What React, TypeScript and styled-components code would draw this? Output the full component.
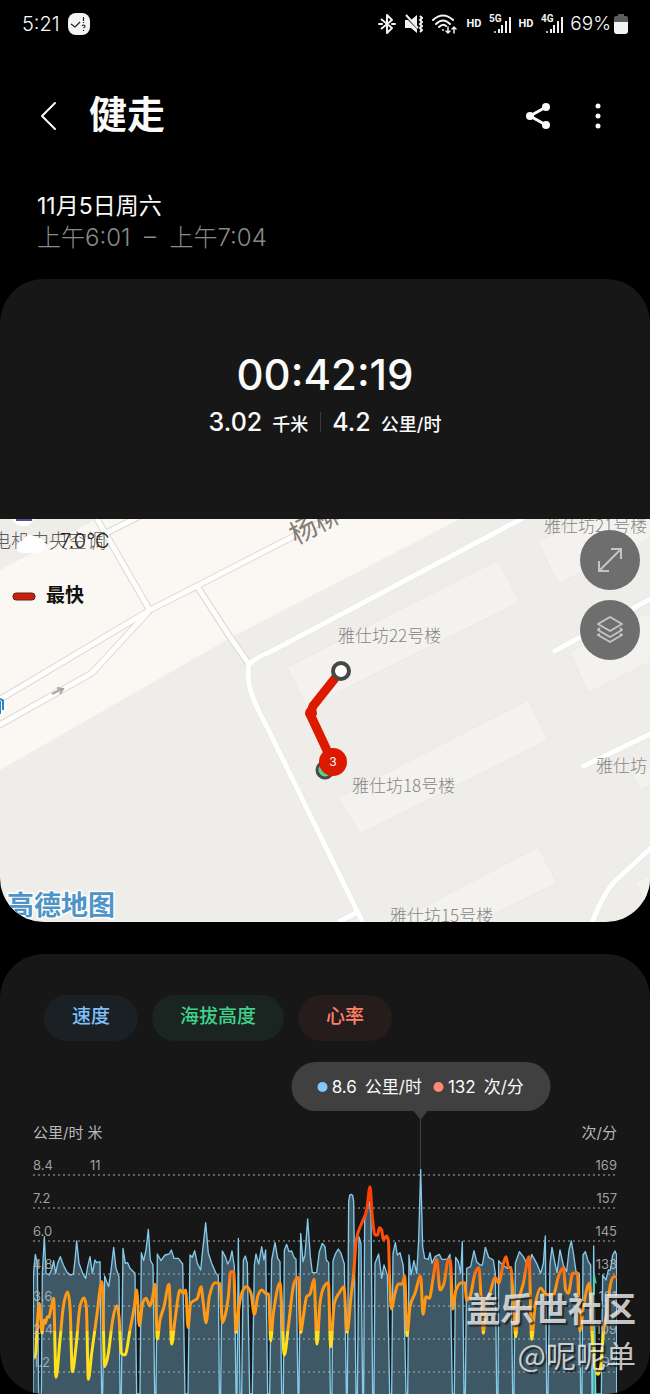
import React from "react";
import styled, { createGlobalStyle } from "styled-components";

const GlobalStyle = createGlobalStyle`
  * { box-sizing: border-box; }
  body {
    margin: 0;
    background: #000;
    color: #fafafa;
    font-family: Inter, "Noto Sans CJK SC", sans-serif;
  }
  button { font: inherit; color: inherit; border: 0; padding: 0; background: none; cursor: pointer; }
  svg { display: block; }
`;

const Page = styled.main`
  width: 100%;
  overflow: hidden;
`;

/* ---------- status bar ---------- */

const StatusBar = styled.div`
  display: flex;
  align-items: center;
  justify-content: space-between;
  height: 48px;
  padding: 0 22px;
`;

const StatusGroup = styled.div<{ $gap: number }>`
  display: flex;
  align-items: center;
  gap: ${(p) => p.$gap}px;
`;

const StatusText = styled.span<{ $large?: boolean }>`
  font-size: ${(p) => (p.$large ? 20 : 19)}px;
  line-height: 24px;
  font-weight: 300;
`;

const HdMark = styled.span`
  font-family: Roboto, sans-serif;
  font-size: 11px;
  line-height: 16px;
  font-weight: 700;
`;

const NetworkText = styled.text`
  font-family: Roboto, sans-serif;
  font-size: 10px;
  font-weight: 700;
`;

/* ---------- header ---------- */

const Header = styled.header`
  display: flex;
  align-items: center;
  height: 136px;
  padding: 0 40px 0 37px;
`;

const IconButton = styled.button`
  display: flex;
  align-items: center;
  justify-content: center;
  width: 24px;
  height: 40px;
`;

const Title = styled.h1`
  flex: 1;
  margin: 0 0 4px 28px;
  font-size: 38px;
  line-height: 48px;
  font-weight: 600;
`;

const Actions = styled.div`
  display: flex;
  gap: 36px;
`;

const DateBlock = styled.section`
  height: 95px;
  padding: 6px 37px 0;
`;

const DateLine = styled.p<{ $muted?: boolean }>`
  margin: 0;
  font-size: ${(p) => (p.$muted ? 24 : 23)}px;
  line-height: 32px;
  font-weight: ${(p) => (p.$muted ? 300 : 400)};
  color: ${(p) => (p.$muted ? "#8a8a8a" : "#fafafa")};
  white-space: pre;
`;

/* ---------- cards ---------- */

const Card = styled.section`
  background: #171717;
  border-radius: 44px;
  overflow: hidden;
  margin-bottom: 32px;

  &:last-of-type { margin-bottom: 0; }
`;

const Summary = styled.div`
  display: flex;
  flex-direction: column;
  align-items: center;
  height: 240px;
  padding-top: 70px;
`;

const Timer = styled.div`
  font-size: 42px;
  line-height: 52px;
  font-weight: 500;
`;

const Stats = styled.div`
  display: flex;
  align-items: center;
  margin-top: 6px;
`;

const Stat = styled.div`
  display: flex;
  align-items: baseline;
  gap: 10px;
  line-height: 30px;

  & + & {
    margin-left: 12px;
    padding-left: 12px;
    position: relative;
  }
  & + &::before {
    content: "";
    position: absolute;
    left: 0;
    top: 5px;
    width: 1px;
    height: 20px;
    background: #3a3a3a;
  }
`;

const StatValue = styled.span`
  font-size: 25px;
  font-weight: 500;
`;

const StatUnit = styled.span`
  font-size: 18px;
  font-weight: 500;
`;

/* ---------- map ---------- */

const MapFrame = styled.div`
  position: relative;
  height: 403px;
`;

const MapCanvas = styled.svg`
  width: 100%;
  height: 100%;
`;

const PlaceName = styled.text`
  font-family: "Noto Sans CJK SC", sans-serif;
  font-size: 17px;
  font-weight: 300;
  fill: #858585;
`;

const MapControls = styled.div`
  position: absolute;
  top: 11px;
  right: 10px;
  display: flex;
  flex-direction: column;
  gap: 10px;
`;

const RoundButton = styled.button`
  display: flex;
  align-items: center;
  justify-content: center;
  width: 60px;
  height: 60px;
  border-radius: 50%;
  background: #6e6e6e;
`;

/* ---------- chart ---------- */

const ChartCard = styled(Card)`
  position: relative;
  padding: 41px 33px 0;
`;

const Tabs = styled.div`
  display: flex;
  gap: 14px;
  padding-left: 11px;
`;

const Tab = styled.button<{ $ink: string; $fill: string }>`
  height: 46px;
  padding: 0 28px 2px;
  border-radius: 23px;
  font-size: 19px;
  line-height: 24px;
  font-weight: 500;
  color: ${(p) => p.$ink};
  background: ${(p) => p.$fill};
`;

const Plot = styled.div`
  position: relative;
  margin-top: 21px;
  padding-top: 62px;
`;

const AxisTitles = styled.div`
  display: flex;
  justify-content: space-between;
  font-size: 15px;
  line-height: 18px;
  margin-bottom: 8px;
  color: #b8b8b8;
  white-space: pre;
`;

const ChartCanvas = styled.svg`
  width: 100%;
  height: auto;
`;

const Tooltip = styled.div`
  position: absolute;
  top: 0;
  left: 66.4%;
  transform: translateX(-50%);
  display: flex;
  align-items: center;
  justify-content: center;
  gap: 12px;
  width: 259px;
  height: 49px;
  border-radius: 25px;
  background: #404040;
  font-size: 17px;
  line-height: 24px;
  white-space: nowrap;
`;

const TooltipPointer = styled.svg`
  position: absolute;
  top: 49px;
  left: 50%;
  width: 16px;
  height: 58px;
  transform: translateX(-50%);
`;

const Reading = styled.span<{ $dot: string }>`
  display: flex;
  align-items: center;
  gap: 8px;

  &::before {
    content: "";
    width: 10px;
    height: 10px;
    margin-right: -4px;
    border-radius: 50%;
    background: ${(p) => p.$dot};
  }
`;

const Signature = styled.div`
  position: absolute;
  right: 14px;
  bottom: 18px;
  display: flex;
  flex-direction: column;
  align-items: flex-end;
  color: rgba(235, 235, 235, 0.82);
  text-shadow: 2px 2px 1px rgba(20, 20, 20, 0.7);
`;

const Community = styled.span`
  font-size: 34px;
  line-height: 44px;
  font-weight: 700;
`;

const Author = styled.span`
  font-family: "Noto Sans CJK SC", sans-serif;
  font-size: 30px;
  line-height: 44px;
`;

/* ---------- chart data: [x, y] in thirds of a pixel ---------- */

type Pt = [number, number];

const pairs = (s: string, dx: number): Pt[] =>
  s
    .trim()
    .split(/\s+/)
    .map((p) => {
      const [x, y] = p.split(",").map(Number);
      return [x + dx, y] as Pt;
    });

const speed: Pt[] = [
  ...pairs(
    `99,762 100,405 106,343 112,370 116,762 124,762 127,400 133,290 138,400 148,405 156,385 161,362 167,400 173,370 181,350 190,375 200,395 210,405 220,402 225,360 230,303 237,370 248,400 257,415 263,380 270,350 277,400 285,360 290,368 300,365 305,762 308,762 314,408 320,425 326,440 332,400 341,322 348,385 357,410 360,762 364,762 369,325 376,370 383,368 390,385 405,400 410,762 420,762 424,338 431,362 438,330 445,268 451,360 459,375 464,762 468,762 472,342 483,362 495,345 508,342 514,330 522,355 535,355 548,372 555,762 564,762 570,345 577,352 584,332 592,370 602,390 608,330 617,248 625,340 635,370 648,400 655,408 658,762`,
    -99
  ),
  ...pairs(
    `17,762 22,333 32,352 38,372 45,360 51,333 58,380 63,762 66,762 70,295 75,762 80,762 85,360 91,348 97,370 104,762 112,762 118,375 123,342 131,372 140,320 147,360 152,330 158,762 164,762 170,360 180,308 188,355 195,365 200,762 205,762 208,330 215,313 222,335 230,333 237,352 243,358 249,762 252,762 257,280 264,365 270,345 278,237 286,350 292,398 305,398 313,335 322,310 330,320 334,360 341,368 346,762 351,762 354,362 362,340 370,327 378,340 388,372 394,762 397,762 401,185 404,166 408,163 413,166 416,185 419,420 423,762 427,762 432,290 438,310 443,762 446,762 449,240 456,210 463,185 468,230 473,762 477,762 480,370 491,342 500,415 507,375 517,405 524,762 530,762 534,340 541,308 547,345 555,338 565,378 573,762 578,762 582,345 588,405 597,362 605,400 611,300 617,88 623,320 629,355 640,358`,
    546
  ),
  ...pairs(
    `0,338 6,370 15,350 28,343 35,358 52,358 60,343 67,762 73,762 77,352 85,365 92,400 97,305 102,762 106,762 110,385 122,380 132,332 140,365 150,375 157,375 166,322 176,352 190,360 196,400 200,762 204,762 206,362 218,375 232,385 243,380 248,762 252,762 256,370 268,335 280,350 290,370 297,385 305,343 320,370 332,400 340,370 346,288 350,762 354,762 360,370 366,322 375,370 381,398 390,330 400,375 410,395 417,330 424,303 431,345 438,395 448,400 452,762 456,762 459,345 466,335 475,365 482,375 486,762 488,762 491,318 497,762 514,762 518,405 528,420 535,390 541,390 548,345 555,333 560,345 560,762`,
    1191
  ),
];

const heart: Pt[] = [
  ...pairs(
    `106,650 112,550 118,490 126,580 132,540 136,550 142,530 147,532 152,510 161,475 168,712 180,600 190,500 203,456 210,500 217,695 228,620 240,500 252,474 259,500 265,718 275,640 290,530 306,425 314,680 325,640 338,540 350,497 357,530 364,640 375,645 390,570 403,500 410,450 418,557 428,490 438,475 450,498 458,470 465,433 472,597 480,540 492,500 507,433 515,612 525,540 540,450 550,460 557,450 564,563 572,490 582,482 592,475 603,440 610,490 618,548 628,470 645,428`,
    -99
  ),
  ...pairs(
    `15,430 22,548 32,520 40,470 47,395 56,395 63,577 72,500 82,455 95,440 108,460 118,523 128,470 140,450 152,460 161,462 167,603 175,520 195,428 208,645 220,560 237,430 250,412 257,577 265,530 275,470 285,462 297,418 306,612 315,490 327,440 340,428 347,620 358,490 375,455 387,440 396,577 408,470 416,400 424,300 440,250 455,210 465,140 472,230 480,285 488,285 493,263 500,270 505,300 514,288 520,300 524,420 529,507 540,460 550,432 562,432 569,408 576,587 585,500 600,460 617,408 624,523 633,470 643,475`,
    546
  ),
  ...pairs(
    `10,410 20,357 30,450 42,430 55,360 62,362 68,507 78,450 95,428 104,428 110,480 120,470 135,400 147,383 153,470 160,580 168,490 180,460 195,412 207,430 218,380 228,350 235,380 243,385 250,480 257,590 265,490 280,430 297,350 305,598 315,500 332,445 345,460 358,465 370,465 385,410 400,383 407,450 415,460 428,400 442,400 450,572 460,500 478,430 485,560 495,680 504,703 512,680 520,580 530,520 542,430 551,410 560,410`,
    1191
  ),
];

/* Cubic curve through every point; peaks and troughs get flat tangents. */
const curve = (pts: Pt[]) => {
  const slope = (i: number) => {
    const a = pts[i - 1];
    const b = pts[i];
    const c = pts[i + 1];
    if (!a || !c || c[0] === a[0]) return 0;
    if ((b[1] - a[1]) * (c[1] - b[1]) <= 0) return 0;
    const s = (c[1] - a[1]) / (c[0] - a[0]);
    const left = (b[1] - a[1]) / (b[0] - a[0] || 1);
    const right = (c[1] - b[1]) / (c[0] - b[0] || 1);
    const cap = 2 * Math.min(Math.abs(left), Math.abs(right));
    return Math.sign(s) * Math.min(Math.abs(s), cap);
  };
  let d = `M${pts[0][0]} ${pts[0][1]}`;
  for (let i = 1; i < pts.length; i++) {
    const [x0, y0] = pts[i - 1];
    const [x1, y1] = pts[i];
    const h = (x1 - x0) / 3;
    d += `C${x0 + h} ${y0 + slope(i - 1) * h} ${x1 - h} ${y1 - slope(i) * h} ${x1} ${y1}`;
  }
  return d;
};

const line = (pts: Pt[]) => "M" + pts.map((p) => p.join(" ")).join("L");

const gridRows = [
  { y: 25, left: "8.4", right: "169" },
  { y: 58, left: "7.2", right: "157" },
  { y: 91, left: "6.0", right: "145" },
  { y: 124, left: "4.8", right: "133" },
  { y: 156, left: "3.6", right: "121" },
  { y: 189, left: "2.4", right: "109" },
  { y: 222, left: "1.2", right: "97" },
];

function Chart() {
  return (
    <ChartCanvas viewBox="0 0 584 244" role="img" aria-label="速度与心率曲线">
      <defs>
        <linearGradient id="hr" gradientUnits="userSpaceOnUse" x1="0" y1="140" x2="0" y2="762">
          <stop offset="0" stopColor="#ff3a06" />
          <stop offset="0.22" stopColor="#ff4a08" />
          <stop offset="0.4" stopColor="#ff6a0c" />
          <stop offset="0.48" stopColor="#ff9410" />
          <stop offset="0.695" stopColor="#ffa01c" />
          <stop offset="0.696" stopColor="#ffe01a" />
          <stop offset="1" stopColor="#ffe01a" />
        </linearGradient>
      </defs>
      <svg x="0" y="-10" width="584" height="254" viewBox="0 0 1752 762">
        <path d={line(speed) + "Z"} fill="#3e5965" />
        <path d={line(speed)} fill="none" stroke="#84caea" strokeWidth="4" strokeLinejoin="round" />
        <path d="M1683 762V400L1686 415L1689 430" fill="none" stroke="#3ed3a6" strokeWidth="4" />
      </svg>
      {gridRows.map((r) => (
        <line key={r.y} x1="0" x2="584" y1={r.y} y2={r.y} stroke="#a9b0b3" strokeWidth="1" strokeDasharray="2 3" />
      ))}
      <svg x="0" y="-10" width="584" height="254" viewBox="0 0 1752 762">
        <path d={curve(heart)} fill="none" stroke="url(#hr)" strokeWidth="9" strokeLinejoin="round" strokeLinecap="round" />
      </svg>
      <g fontSize="13" fill="#b9bdbf" fillOpacity="0.85">
        {gridRows.map((r) => (
          <React.Fragment key={r.left}>
            <text x="0" y={r.y - 5}>{r.left}</text>
            <text x="584" y={r.y - 5} textAnchor="end">{r.right}</text>
          </React.Fragment>
        ))}
        <text x="57" y="20">11</text>
      </g>
    </ChartCanvas>
  );
}

const roads = [
  "M-6 184L150 91L197 67L335 -4",
  "M96 -2L149 90",
  "M149 92L92 154L-6 209",
  "M197 67L230 118L249 145",
  "M106 14L140 -3",
];

const footpaths = [
  "M250 145C256 138 264 136 272 132L525 -2",
  "M249 144C246 162 250 176 265 204L363 404",
  "M553 133L652 79",
  "M582 248L652 214",
  "M592 404C598 388 604 374 614 363L652 328",
  "M338 403L358 393",
];

const buildings = [
  "M287 148L498 41L520 83L307 189Z",
  "M538 23L630 -24H650V20L558 65Z",
  "M570 133L650 93V143L588 174Z",
  "M338 279L528 181L548 221L360 315Z",
  "M395 403L538 328L557 364L478 403Z",
  "M633 256L650 247V266L640 271Z",
  "M635 364L650 356V390Z",
];

const placeNames = [
  { x: 338, y: 123, t: "雅仕坊22号楼" },
  { x: 352, y: 273, t: "雅仕坊18号楼" },
  { x: 390, y: 403, t: "雅仕坊15号楼" },
  { x: 544, y: 13, t: "雅仕坊21号楼" },
  { x: 596, y: 253, t: "雅仕坊" },
];

function RouteMap() {
  return (
    <MapFrame>
      <MapCanvas viewBox="0 0 650 403" preserveAspectRatio="xMidYMid slice" role="img" aria-label="路线地图">
        <rect width="650" height="403" fill="#efede9" />
        <path d="M0 51L97 0H460L230 119L0 251Z" fill="#fbf8f3" />
        {buildings.map((d) => (
          <path key={d} d={d} fill="#f4f2ee" stroke="#ebe9e4" strokeWidth="1" />
        ))}
        {roads.map((d) => (
          <path key={d} d={d} fill="none" stroke="#dcd8d4" strokeWidth="7" strokeLinejoin="round" />
        ))}
        {footpaths.map((d) => (
          <path key={d} d={d} fill="none" stroke="#e4e3e0" strokeWidth="6" />
        ))}
        {roads.map((d) => (
          <path key={d} d={d} fill="none" stroke="#fefefd" strokeWidth="5" strokeLinejoin="round" />
        ))}
        {footpaths.map((d) => (
          <path key={d} d={d} fill="none" stroke="#fff" strokeWidth="5" />
        ))}
        <path d="M52 175L62 170M57 169L63 170L60 175" fill="none" stroke="#aaa6a2" strokeWidth="2" />
        <circle cx="23" cy="-5" r="12" fill="#fff" />
        <rect x="16" y="-2" width="16" height="4" fill="#5b4a9b" />
        <circle cx="-4" cy="187" r="11" fill="#fff" />
        <path d="M0 180L4 182M0 182V195M3 182V191" stroke="#2b86c8" strokeWidth="2" />

        {placeNames.map((p) => (
          <PlaceName key={p.t} x={p.x} y={p.y}>{p.t}</PlaceName>
        ))}
        <text x="296" y="26" fontSize="27" fill="#837c74" transform="rotate(-28 296 26)">杨柳</text>
        <text x="-8" y="29" fontSize="19" fill="#5d5d5d" fontWeight="300">电机中央空调</text>
        <path d="M22 34a6 6 0 0 1 1-12a8 8 0 0 1 14-3a7 7 0 0 1 6 12q-2 3-5 3Z" fill="#fff" />
        <text x="60" y="29" fontSize="20" fontWeight="300" fill="#222">7.0°C</text>

        <rect x="13" y="74" width="22" height="7" rx="3" fill="#c9200c" stroke="#5e231c" />
        <text x="46" y="83" fontSize="19" fontWeight="600" fill="#111">最快</text>

        <circle cx="325" cy="251" r="8" fill="#5bd38a" stroke="#4a4a4a" strokeWidth="3" />
        <path d="M340 153L313 187L310 195L331 240" fill="none" stroke="#db1a00" strokeWidth="9" strokeLinejoin="round" />
        <circle cx="311" cy="194" r="6" fill="#db1a00" />
        <circle cx="341" cy="152" r="8" fill="#fff" stroke="#474747" strokeWidth="4" />
        <circle cx="333" cy="243" r="14" fill="#db1a00" />
        <text x="333" y="247" fontSize="12" fill="#fff" textAnchor="middle">3</text>

        <text
          x="7" y="396" fontSize="27" fontWeight="700" fill="#4f94c6"
          stroke="#fff" strokeWidth="3" paintOrder="stroke"
        >
          高德地图
        </text>
      </MapCanvas>
      <MapControls>
        <RoundButton aria-label="展开地图">
          <svg width="26" height="26" viewBox="0 0 26 26" fill="none" stroke="#c4c4c4" strokeWidth="2">
            <path d="M2 24L24 2M14 2H24V12M2 14V24H12" />
          </svg>
        </RoundButton>
        <RoundButton aria-label="地图图层">
          <svg width="28" height="28" viewBox="0 0 28 28" fill="none" stroke="#c4c4c4" strokeWidth="2" strokeLinejoin="round">
            <path d="M14 1L26 8L14 15L2 8Z" />
            <path d="M4 12L2 14L14 21L26 14L24 12" />
            <path d="M4 18L2 19L14 26L26 19L24 18" />
          </svg>
        </RoundButton>
      </MapControls>
    </MapFrame>
  );
}

function SignalIcon({ label }: { label: string }) {
  return (
    <svg width="22" height="22" viewBox="0 0 22 22" fill="#f2f2f2">
      <NetworkText x="0" y="9">{label}</NetworkText>
      <circle cx="6" cy="19" r="1" />
      <path d="M9 16h2v4H9zM12 12h2v8h-2zM16 8h2v12h-2zM20 4h2v16h-2z" />
    </svg>
  );
}

export default function App() {
  return (
    <Page>
      <GlobalStyle />
      <StatusBar>
        <StatusGroup $gap={8}>
          <StatusText $large>5:21</StatusText>
          <svg width="22" height="22" viewBox="0 0 22 22">
            <rect width="22" height="22" rx="8" fill="#f4f4f4" />
            <path d="M3 11L7 14L12 9" fill="none" stroke="#222" strokeWidth="1.2" />
            <path d="M15.500 4V8M15.500 9V10M14 13q1.500-2 3 0q0 1-1.500 2M15.500 17V18" fill="none" stroke="#222" strokeWidth="1.200" />
          </svg>
        </StatusGroup>
        <StatusGroup $gap={7}>
          <StatusGroup $gap={9}>
            <svg width="18" height="22" viewBox="0 0 18 22" fill="none" stroke="#f2f2f2" strokeWidth="2" strokeLinejoin="round">
              <path d="M3 6L14 15L9 20V2L14 7L3 16" />
              <path d="M1 11h3M14 11h3" strokeLinecap="round" />
            </svg>
            <svg width="18" height="20" viewBox="0 0 18 20" fill="#f2f2f2">
              <path d="M0 6h3L12 15V19L6 14H0zM6 6L12 1V12z" />
              <path d="M1 1L13 14" fill="none" stroke="#f2f2f2" strokeWidth="2" />
              <path d="M15 2l2 2l-2 2l2 2l-2 2l2 2l-2 2l2 2l-2 2" fill="none" stroke="#f2f2f2" strokeWidth="2" />
            </svg>
            <svg width="27" height="21" viewBox="0 0 27 21" fill="none" stroke="#f2f2f2" strokeWidth="2" strokeLinecap="round">
              <path d="M1 6Q11 -3 21 6M4 10Q11 3 18 10M7 13Q11 9 14 12" />
              <circle cx="11" cy="16" r="1" fill="#f2f2f2" stroke="none" />
              <path d="M16 13v6M14 17l2 2l2-2M22 19v-6M20 15l2-2l2 2" strokeWidth="1.500" />
            </svg>
          </StatusGroup>
          <StatusGroup $gap={8}>
            <HdMark>HD</HdMark>
            <SignalIcon label="5G" />
          </StatusGroup>
          <StatusGroup $gap={8}>
            <HdMark>HD</HdMark>
            <SignalIcon label="4G" />
          </StatusGroup>
          <StatusGroup $gap={3}>
            <StatusText>69%</StatusText>
            <svg width="14" height="20" viewBox="0 0 14 20">
              <path d="M4 0h6v2h2q2 0 2 2v5H0V4q0-2 2-2h2z" fill="#5c5c5c" />
              <path d="M0 8h14v9q0 3-3 3H3q-3 0-3-3z" fill="#f4f4f4" />
            </svg>
          </StatusGroup>
        </StatusGroup>
      </StatusBar>

      <Header>
        <IconButton aria-label="返回">
          <svg width="18" height="30" viewBox="0 0 18 30" fill="none" stroke="#fafafa" strokeWidth="2" strokeLinecap="round" strokeLinejoin="round">
            <path d="M15 2L2 15L15 28" />
          </svg>
        </IconButton>
        <Title>健走</Title>
        <Actions>
          <IconButton aria-label="分享">
            <svg width="24" height="28" viewBox="0 0 24 28" fill="#fafafa">
              <path d="M20 5L4 14L20 23" fill="none" stroke="#fafafa" strokeWidth="3" />
              <circle cx="4" cy="14" r="4" />
              <circle cx="20" cy="5" r="4" />
              <circle cx="20" cy="23" r="4" />
            </svg>
          </IconButton>
          <IconButton aria-label="更多选项">
            <svg width="6" height="26" viewBox="0 0 6 26" fill="#fafafa">
              <circle cx="3" cy="3" r="2.500" />
              <circle cx="3" cy="13" r="2.500" />
              <circle cx="3" cy="23" r="2.500" />
            </svg>
          </IconButton>
        </Actions>
      </Header>

      <DateBlock>
        <DateLine>11月5日周六</DateLine>
        <DateLine $muted>上午6:01  –  上午7:04</DateLine>
      </DateBlock>

      <Card>
        <Summary>
          <Timer>00:42:19</Timer>
          <Stats>
            <Stat>
              <StatValue>3.02</StatValue>
              <StatUnit>千米</StatUnit>
            </Stat>
            <Stat>
              <StatValue>4.2</StatValue>
              <StatUnit>公里/时</StatUnit>
            </Stat>
          </Stats>
        </Summary>
        <RouteMap />
      </Card>

      <ChartCard>
        <Tabs>
          <Tab $ink="#7fc0fb" $fill="#1b2025">速度</Tab>
          <Tab $ink="#41d18b" $fill="#1a2521">海拔高度</Tab>
          <Tab $ink="#ff8068" $fill="#251c1b">心率</Tab>
        </Tabs>
        <Plot>
          <AxisTitles>
            <span>公里/时 米</span>
            <span>次/分</span>
          </AxisTitles>
          <Chart />
          <Tooltip>
            <Reading $dot="#80c8ff">
              <span>8.6</span>
              <span>公里/时</span>
            </Reading>
            <Reading $dot="#ff8a73">
              <span>132</span>
              <span>次/分</span>
            </Reading>
            <TooltipPointer viewBox="0 0 16 58">
              <path d="M1 0H15L8 9Z" fill="#404040" />
              <path d="M8 8V58" stroke="#404040" strokeWidth="1" />
            </TooltipPointer>
          </Tooltip>
        </Plot>
        <Signature>
          <Community>盖乐世社区</Community>
          <Author>@呢呢单</Author>
        </Signature>
      </ChartCard>
    </Page>
  );
}
